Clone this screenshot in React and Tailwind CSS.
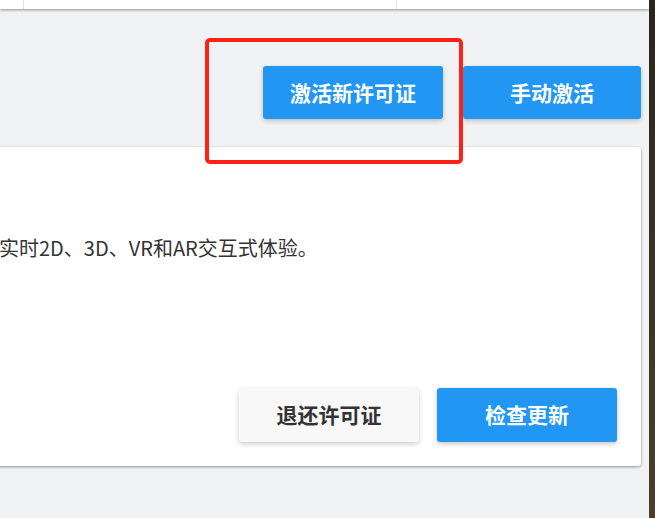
export default function App() {
  const font = { fontFamily: '"Noto Sans CJK SC", "Noto Sans", sans-serif' };
  return (
    <div className="w-[655px] h-[518px] flex overflow-hidden" style={font}>
      <div className="relative flex-1 flex flex-col bg-[#f1f2f4] overflow-hidden">
        <div className="h-[9px] shrink-0 bg-white flex shadow-[0_1px_3px_rgba(0,0,0,0.4)] z-10">
          <div className="w-[24px] border-r border-[#e3e3e3]"></div>
          <div className="w-[373px] border-r border-[#e3e3e3]"></div>
          <div className="flex-1"></div>
        </div>
        <div className="mt-[57px] flex justify-end gap-[20px] pr-[8px]">
          <button className="w-[180px] h-[53px] rounded-[3px] bg-[#2196f3] text-white text-[21px] font-bold shadow-[0_2px_5px_rgba(0,0,0,0.22)]">
            激活新许可证
          </button>
          <button className="w-[178px] h-[53px] rounded-[3px] bg-[#2196f3] text-white text-[21px] font-bold shadow-[0_2px_5px_rgba(0,0,0,0.22)]">
            手动激活
          </button>
        </div>
        <div className="mt-[28px] ml-[-40px] mr-[8px] h-[319px] bg-white rounded-[3px] shadow-[0_1px_3px_rgba(0,0,0,0.4)] flex flex-col pl-[39px] pr-[24px] pt-[86px] pb-[24px]">
          <p className="text-[20px] leading-[30px] text-[#333] whitespace-nowrap">
            实时2D、3D、VR和AR交互式体验。
          </p>
          <div className="mt-auto flex justify-end gap-[18px]">
            <button className="w-[180px] h-[54px] rounded-[3px] bg-[#f8f8f8] text-[#333] text-[21px] font-bold shadow-[0_2px_5px_rgba(0,0,0,0.2)]">
              退还许可证
            </button>
            <button className="w-[180px] h-[54px] rounded-[3px] bg-[#2196f3] text-white text-[21px] font-bold shadow-[0_2px_5px_rgba(0,0,0,0.22)]">
              检查更新
            </button>
          </div>
        </div>
        <div className="absolute left-[205px] top-[38px] w-[258px] h-[126px] border-[4px] border-[#ff2116] rounded-[5px] z-20"></div>
      </div>
      <div className="w-[6px] shrink-0 bg-gradient-to-b from-[#2a241d] via-[#3b3226] to-[#4a3f2c]"></div>
    </div>
  );
}
